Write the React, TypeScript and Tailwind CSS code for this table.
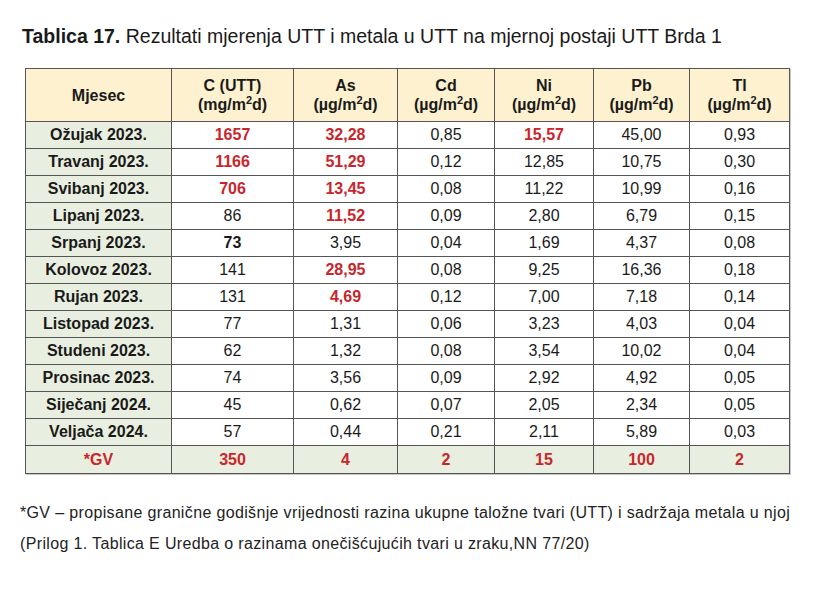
const red = "text-[#c8262c] font-bold"

type Cell = { v: string; hl?: boolean; bold?: boolean }

const rows: { month: string; cells: Cell[] }[] = [
  { month: "Ožujak 2023.", cells: [{ v: "1657", hl: true }, { v: "32,28", hl: true }, { v: "0,85" }, { v: "15,57", hl: true }, { v: "45,00" }, { v: "0,93" }] },
  { month: "Travanj 2023.", cells: [{ v: "1166", hl: true }, { v: "51,29", hl: true }, { v: "0,12" }, { v: "12,85" }, { v: "10,75" }, { v: "0,30" }] },
  { month: "Svibanj 2023.", cells: [{ v: "706", hl: true }, { v: "13,45", hl: true }, { v: "0,08" }, { v: "11,22" }, { v: "10,99" }, { v: "0,16" }] },
  { month: "Lipanj 2023.", cells: [{ v: "86" }, { v: "11,52", hl: true }, { v: "0,09" }, { v: "2,80" }, { v: "6,79" }, { v: "0,15" }] },
  { month: "Srpanj 2023.", cells: [{ v: "73", bold: true }, { v: "3,95" }, { v: "0,04" }, { v: "1,69" }, { v: "4,37" }, { v: "0,08" }] },
  { month: "Kolovoz 2023.", cells: [{ v: "141" }, { v: "28,95", hl: true }, { v: "0,08" }, { v: "9,25" }, { v: "16,36" }, { v: "0,18" }] },
  { month: "Rujan 2023.", cells: [{ v: "131" }, { v: "4,69", hl: true }, { v: "0,12" }, { v: "7,00" }, { v: "7,18" }, { v: "0,14" }] },
  { month: "Listopad 2023.", cells: [{ v: "77" }, { v: "1,31" }, { v: "0,06" }, { v: "3,23" }, { v: "4,03" }, { v: "0,04" }] },
  { month: "Studeni 2023.", cells: [{ v: "62" }, { v: "1,32" }, { v: "0,08" }, { v: "3,54" }, { v: "10,02" }, { v: "0,04" }] },
  { month: "Prosinac 2023.", cells: [{ v: "74" }, { v: "3,56" }, { v: "0,09" }, { v: "2,92" }, { v: "4,92" }, { v: "0,05" }] },
  { month: "Siječanj 2024.", cells: [{ v: "45" }, { v: "0,62" }, { v: "0,07" }, { v: "2,05" }, { v: "2,34" }, { v: "0,05" }] },
  { month: "Veljača 2024.", cells: [{ v: "57" }, { v: "0,44" }, { v: "0,21" }, { v: "2,11" }, { v: "5,89" }, { v: "0,03" }] },
]

const headers = [
  { name: "C (UTT)", unit: "mg" },
  { name: "As", unit: "µg" },
  { name: "Cd", unit: "µg" },
  { name: "Ni", unit: "µg" },
  { name: "Pb", unit: "µg" },
  { name: "Tl", unit: "µg" },
]

const widths = ["w-[146px]", "w-[122px]", "w-[104px]", "w-[97px]", "w-[99px]", "w-[96px]", "w-[100px]"]
const gv = ["350", "4", "2", "15", "100", "2"]

export default function App() {
  return (
    <div className="w-[836px] h-[589px] bg-white text-[#1a1a1a] font-['Liberation_Sans',Arial,sans-serif]">
      <h1 className="pl-[22px] pt-[24px] text-[19.5px] leading-[24px]">
        <span className="font-bold">Tablica 17.</span> Rezultati mjerenja UTT i metala u UTT na mjernoj postaji UTT Brda 1
      </h1>

      <div className="ml-[25px] mt-[20px] w-[765px]">
        <table className="table-fixed border-collapse w-[764px] border border-[#808080] text-[16px] text-center shadow-[1px_1px_0_#c8c8c8]">
          <colgroup>
            {widths.map((w, i) => (
              <col key={i} className={w} />
            ))}
          </colgroup>
          <thead>
            <tr className="h-[53px] bg-[#fdf1d0] font-bold leading-[19px]">
              <th className="border border-[#555]">Mjesec</th>
              {headers.map((h) => (
                <th key={h.name} className="border border-[#555]">
                  <div>{h.name}</div>
                  <div>
                    ({h.unit}/m<sup className="text-[11px] -top-[6px]">2</sup>d)
                  </div>
                </th>
              ))}
            </tr>
          </thead>
          <tbody>
            {rows.map((r) => (
              <tr key={r.month} className="h-[27px]">
                <td className="border border-[#555] bg-[#e9efe0] font-bold">{r.month}</td>
                {r.cells.map((c, i) => (
                  <td key={i} className={`border border-[#555] ${c.hl ? red : c.bold ? "font-bold" : ""}`}>
                    {c.v}
                  </td>
                ))}
              </tr>
            ))}
            <tr className="h-[28px] bg-[#e9efe0]">
              <td className={`border border-[#555] ${red}`}>*GV</td>
              {gv.map((v, i) => (
                <td key={i} className={`border border-[#555] ${red}`}>
                  {v}
                </td>
              ))}
            </tr>
          </tbody>
        </table>
      </div>

      <div className="pl-[20px] mt-[23px] text-[16px] leading-[31px] tracking-[0.35px] text-[#222]">
        <p>*GV – propisane granične godišnje vrijednosti razina ukupne taložne tvari (UTT) i sadržaja metala u njoj</p>
        <p>(Prilog 1. Tablica E Uredba o razinama onečišćujućih tvari u zraku,NN 77/20)</p>
      </div>
    </div>
  )
}
